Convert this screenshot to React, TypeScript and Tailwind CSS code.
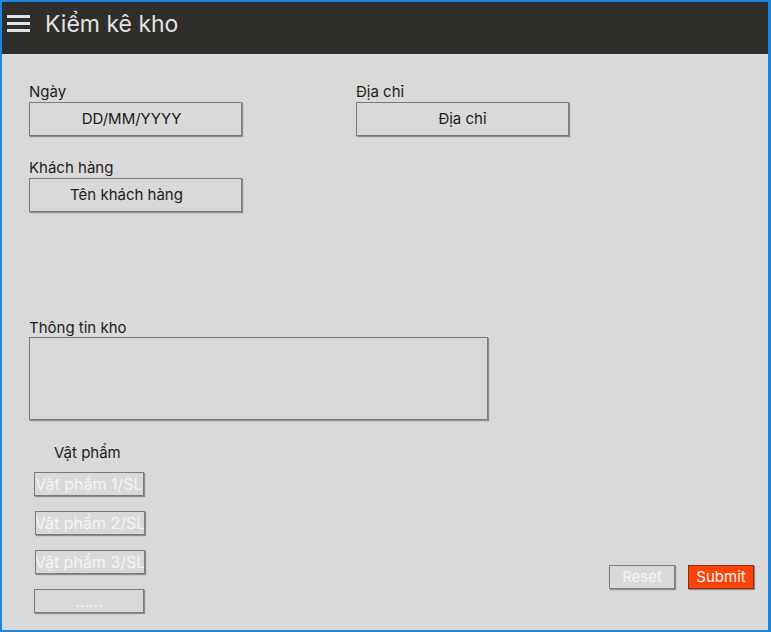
import React from "react";

const box =
  "border border-[#7b7b7b] bg-[#d9d9d9] shadow-[1px_1px_1px_rgba(0,0,0,0.35)]";

function Field({
  label,
  value,
  nudge,
}: {
  label: string;
  value: string;
  nudge?: string;
}) {
  return (
    <div className="flex flex-col w-[213px]">
      <span className="text-[15px] leading-[20px] text-[#1c1c1c]">{label}</span>
      <div
        className={`${box} h-[34px] flex items-center justify-center text-[15px] text-[#1c1c1c]`}
      >
        <span className={nudge}>{value}</span>
      </div>
    </div>
  );
}

function Item({ text, shift }: { text: string; shift?: boolean }) {
  return (
    <div
      className={`${box} w-[110px] h-[24px] flex items-center justify-center text-[16px] text-[#f4f4f4] whitespace-nowrap overflow-hidden ${
        shift ? "ml-[1px]" : ""
      }`}
    >
      {text}
    </div>
  );
}

export default function App() {
  return (
    <div
      className="w-[771px] h-[632px] border-t-2 border-l-2 border-b-2 border-r-[3px] border-[#1a87e0] bg-[#d9d9d9] flex flex-col overflow-hidden"
      style={{ fontFamily: "Inter, 'Noto Sans', sans-serif" }}
    >
      <header className="h-[52px] bg-[#2f2e2b] flex items-start shrink-0">
        <svg width="23" height="18" viewBox="0 0 23 18" className="ml-[5px] mt-[12px]">
          <rect x="0" y="1" width="23" height="3" fill="#e2e2e2" />
          <rect x="0" y="8" width="23" height="3" fill="#e2e2e2" />
          <rect x="0" y="15" width="23" height="3" fill="#e2e2e2" />
        </svg>
        <h1 className="ml-[15px] mt-[8px] text-[23px] text-[#e2e2e2] leading-[28px]">
          Kiểm kê kho
        </h1>
      </header>

      <main className="flex-1 pl-[27px] pt-[28px]">
        <div className="flex gap-[114px]">
          <Field label="Ngày" value="DD/MM/YYYY" nudge="-ml-[8px]" />
          <Field label="Địa chỉ" value="Địa chỉ" />
        </div>
        <div className="mt-[22px]">
          <Field label="Khách hàng" value="Tên khách hàng" nudge="-ml-[18px]" />
        </div>

        <div className="mt-[107px] flex flex-col w-[459px]">
          <span className="text-[15px] leading-[18px] text-[#1c1c1c]">
            Thông tin kho
          </span>
          <div className={`${box} h-[83px]`} />
        </div>

        <div className="mt-[23px] pl-[5px] flex items-end justify-between pr-[14px]">
          <div className="flex flex-col">
            <span className="ml-[20px] text-[15px] leading-[20px] text-[#1c1c1c]">
              Vật phẩm
            </span>
            <div className="mt-[9px] flex flex-col gap-[15px]">
              <Item text="Vật phẩm 1/SL" />
              <Item text="Vật phẩm 2/SL" shift />
              <Item text="Vật phẩm 3/SL" shift />
              <Item text="......" />
            </div>
          </div>
          <div className="flex gap-[13px] mb-[24px]">
            <button
              className={`${box} w-[66px] h-[24px] text-[15px] text-[#f4f4f4] flex items-center justify-center`}
            >
              Reset
            </button>
            <button className="w-[66px] h-[24px] bg-[#fc4206] border border-[#8a2a10] shadow-[1px_1px_1px_rgba(0,0,0,0.35)] text-[15px] text-[#f8f8f8] flex items-center justify-center">
              Submit
            </button>
          </div>
        </div>
      </main>
    </div>
  );
}
